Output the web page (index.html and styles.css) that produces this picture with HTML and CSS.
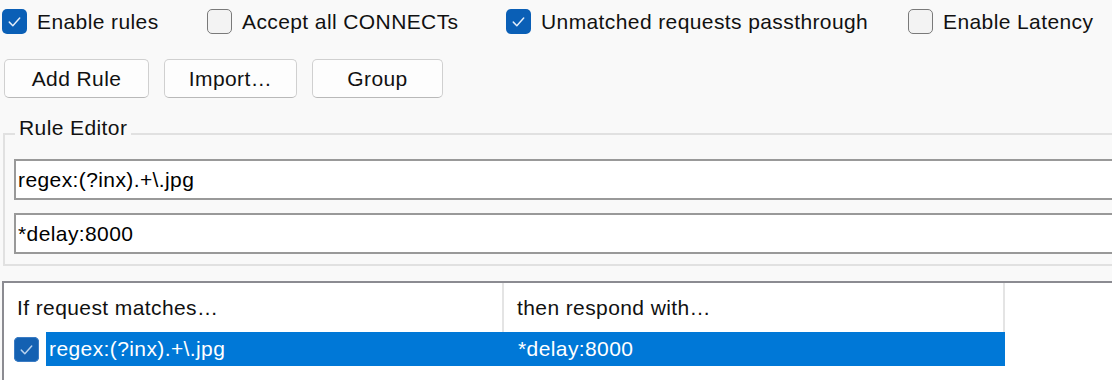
FILE: index.html
```html
<!DOCTYPE html>
<html lang="en">
<head>
<meta charset="utf-8">
<title>AutoResponder</title>
<link rel="stylesheet" href="styles.css">
</head>
<body>
<div class="panel">
  <div class="options">
    <label class="opt">
      <span class="box checked"><svg viewBox="0 0 24 24"><path d="M7 12.6 L10.4 16 L17 8.6"/></svg></span>
      <span class="opt-text">Enable rules</span>
    </label>
    <label class="opt">
      <span class="box"></span>
      <span class="opt-text">Accept all CONNECTs</span>
    </label>
    <label class="opt">
      <span class="box checked"><svg viewBox="0 0 24 24"><path d="M7 12.6 L10.4 16 L17 8.6"/></svg></span>
      <span class="opt-text">Unmatched requests passthrough</span>
    </label>
    <label class="opt">
      <span class="box"></span>
      <span class="opt-text">Enable Latency</span>
    </label>
  </div>

  <div class="buttons">
    <button class="btn btn-add">Add Rule</button>
    <button class="btn btn-import">Import…</button>
    <button class="btn btn-group">Group</button>
  </div>

  <fieldset class="editor">
    <legend class="editor-title">Rule Editor</legend>
    <input class="field" type="text" value="regex:(?inx).+\.jpg" readonly>
    <input class="field" type="text" value="*delay:8000" readonly>
  </fieldset>

  <div class="list">
    <div class="list-head">
      <div class="col col-match">If request matches…</div>
      <div class="col col-respond">then respond with…</div>
    </div>
    <div class="list-row">
      <span class="row-check"><svg viewBox="0 0 24 24"><path d="M7 12.6 L10.4 16 L17 8.6"/></svg></span>
      <div class="row-sel">
        <div class="cell cell-match">regex:(?inx).+\.jpg</div>
        <div class="cell cell-respond">*delay:8000</div>
      </div>
    </div>
  </div>
</div>
</body>
</html>
```

FILE: styles.css
```css
html, body {
  margin: 0;
  padding: 0;
  background: #f9f9f9;
  overflow: hidden;
}

body {
  width: 1112px;
  height: 380px;
  font-family: "Liberation Sans", Arial, sans-serif;
  font-size: 21px;
  letter-spacing: 0.4px;
  color: #111;
}

.panel {
  width: 1112px;
  height: 380px;
  overflow: hidden;
}

/* top options */
.options {
  display: grid;
  grid-template-columns: 205px 299px 402px auto;
  padding: 9px 0 0 2px;
  height: 25px;
}

.opt {
  display: flex;
  align-items: center;
  gap: 10px;
  height: 25px;
  line-height: 25px;
  white-space: nowrap;
}

.box {
  width: 25px;
  height: 25px;
  box-sizing: border-box;
  border-radius: 5px;
  border: 1.5px solid #7a7a7a;
  background: #f3f3f3;
  flex: none;
  display: flex;
}

.box.checked {
  border: none;
  background: #0a5fb6;
}

.box svg, .row-check svg {
  width: 100%;
  height: 100%;
}

.box path, .row-check path {
  fill: none;
  stroke: #e4eefa;
  stroke-width: 1.4;
  stroke-linecap: round;
  stroke-linejoin: round;
}

/* buttons */
.buttons {
  display: flex;
  gap: 15px;
  margin: 25px 0 0 4px;
}

.btn {
  height: 39px;
  box-sizing: border-box;
  border: 1px solid #d0d0d0;
  border-bottom-color: #b9b9b9;
  border-radius: 5px;
  background: #fdfdfd;
  font-family: "Liberation Sans", Arial, sans-serif;
  font-size: 21px;
  letter-spacing: 0.4px;
  color: #111;
  padding: 0;
  line-height: 37px;
}

.btn-add { width: 145px; }
.btn-import { width: 133px; }
.btn-group { width: 131px; }

/* rule editor group */
.editor {
  margin: 18px 0 0 3px;
  width: 1300px;
  box-sizing: border-box;
  border: 2px solid #e1e1e1;
  padding: 7px 10px 10px 9px;
  min-width: 0;
}

.editor-title {
  padding: 0 4px 12px 4px;
  margin-left: 1px;
  line-height: 24px;
  color: #111;
}

.field {
  display: block;
  width: 100%;
  height: 41px;
  box-sizing: border-box;
  border: 2px solid #999;
  background: #fff;
  margin: 0 0 13px 0;
  padding: 0 0 0 2px;
  font-family: "Liberation Sans", Arial, sans-serif;
  font-size: 21px;
  letter-spacing: 0.4px;
  color: #000;
  outline: none;
}

.field:last-child {
  margin-bottom: 0;
}

/* list view */
.list {
  margin: 15px 0 0 2px;
  width: 1300px;
  height: 200px;
  background: #fff;
  border-top: 2px solid #8b8b91;
  border-left: 2px solid #8b8b91;
}

.list-head {
  display: flex;
  height: 49px;
  align-items: stretch;
}

.col {
  box-sizing: border-box;
  padding: 0 0 0 13px;
  line-height: 49px;
  border-right: 2px solid #e4e4e4;
  color: #111;
  white-space: nowrap;
}

.col-match { width: 500px; }
.col-respond { width: 501px; }

.list-row {
  display: flex;
  align-items: center;
  height: 34px;
}

.row-check {
  width: 25px;
  height: 25px;
  margin-left: 10px;
  border-radius: 5px;
  background: #1461b2;
  box-shadow: inset 0 0 0 1px #3b7cc4;
  display: flex;
  flex: none;
}

.row-check path {
  stroke: #b9d2ee;
}

.row-sel {
  display: flex;
  margin-left: 7px;
  height: 34px;
  width: 959px;
  background: #0078d7;
  color: #fff;
  line-height: 34px;
}

.cell {
  white-space: nowrap;
}

.cell-match {
  width: 459px;
  padding-left: 3px;
}

.cell-respond {
  padding-left: 10px;
}
```
